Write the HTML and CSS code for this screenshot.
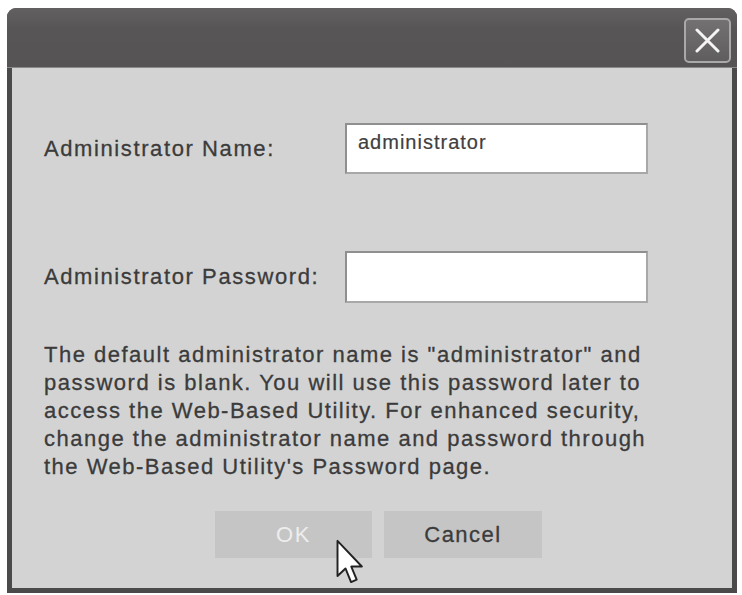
FILE: index.html
```html
<!DOCTYPE html>
<html>
<head>
<meta charset="utf-8">
<link rel="stylesheet" href="styles.css">
</head>
<body>
<div class="window">
  <div class="titlebar">
    <button class="close" aria-label="Close">
      <svg width="25" height="25" viewBox="0 0 25 25"><path d="M2 2 L23 23 M23 2 L2 23" stroke="#f4f4f4" stroke-width="3" stroke-linecap="round"/></svg>
    </button>
  </div>
  <div class="content">
    <div class="row">
      <label class="label">Administrator Name:</label>
      <input class="field" type="text" value="administrator">
    </div>
    <div class="row row-pass">
      <label class="label">Administrator Password:</label>
      <input class="field" type="password" value="">
    </div>
    <p class="note">The default administrator name is "administrator" and<br>password is blank. You will use this password later to<br>access the Web-Based Utility. For enhanced security,<br>change the administrator name and password through<br>the Web-Based Utility's Password page.</p>
    <div class="buttons">
      <button class="btn btn-ok">OK</button>
      <button class="btn btn-cancel">Cancel</button>
    </div>
  </div>
  <svg class="pointer" width="28" height="46" viewBox="0 0 13 21"><path d="M0.7 0.7 L0.7 17 L4.4 13.5 L7 19.8 L9.6 18.7 L7.1 12.6 L12 12.6 Z" fill="#fff" stroke="#222" stroke-width="0.9" stroke-linejoin="round"/></svg>
</div>
</body>
</html>
```
FILE: styles.css
```css
* { box-sizing: border-box; }
html, body { margin: 0; padding: 0; background: #ffffff; }
body { font-family: "Liberation Sans", Arial, sans-serif; }

.window {
  position: relative;
  width: 730px;
  height: 585px;
  margin: 8px 0 0 7px;
  border-radius: 9px 9px 0 0;
  background: #4a4a4a;
  padding: 0 5px 5px 5px;
  display: flex;
  flex-direction: column;
  overflow: hidden;
}

.titlebar {
  height: 60px;
  margin: 0 -5px;
  background: linear-gradient(#626060 0%, #575555 35%, #555353 100%);
  border-bottom: 1px solid #8a8a8a;
  display: flex;
  justify-content: flex-end;
  align-items: flex-start;
  padding: 10px 6px 0 0;
  flex: none;
}

.close {
  width: 47px;
  height: 45px;
  border: 2px solid #a9a9a9;
  border-radius: 5px;
  background: linear-gradient(#737171, #5f5d5d);
  display: flex;
  align-items: center;
  justify-content: center;
  padding: 0;
}

.content {
  flex: 1;
  background: #d3d3d3;
  padding: 55px 0 0 32px;
  color: #3b3b3b;
}

.row {
  display: flex;
  align-items: center;
  height: 51px;
}
.row-pass { margin-top: 77px; height: 52px; }

.label {
  width: 301px;
  font-size: 22px;
  letter-spacing: 1.6px;
  color: #3b3b3b;
  -webkit-text-stroke: 0.3px #3b3b3b;
}

.field {
  width: 303px;
  height: 100%;
  border: 2px solid #8f8f8f;
  border-right-color: #a8a8a8;
  border-bottom-color: #a8a8a8;
  background: #ffffff;
  font-family: "Liberation Sans", Arial, sans-serif;
  font-size: 20px;
  letter-spacing: 1px;
  color: #404040;
  -webkit-text-stroke: 0.2px #404040;
  padding: 4px 11px 16px 11px;
  outline: none;
}

.note {
  margin: 38px 0 0 0;
  font-size: 22px;
  line-height: 28px;
  letter-spacing: 1.5px;
  color: #3b3b3b;
  -webkit-text-stroke: 0.3px #3b3b3b;
}

.buttons {
  display: flex;
  gap: 12px;
  margin: 30px 0 0 171px;
}

.btn {
  width: 157px;
  height: 47px;
  border: none;
  background: #c5c5c5;
  font-family: "Liberation Sans", Arial, sans-serif;
  font-size: 22px;
  letter-spacing: 1.5px;
  padding: 0;
}
.btn-ok { color: #ededed; }
.btn-cancel { width: 158px; color: #3b3b3b; -webkit-text-stroke: 0.3px #3b3b3b; }

.pointer {
  position: absolute;
  left: 329px;
  top: 531px;
}
```
